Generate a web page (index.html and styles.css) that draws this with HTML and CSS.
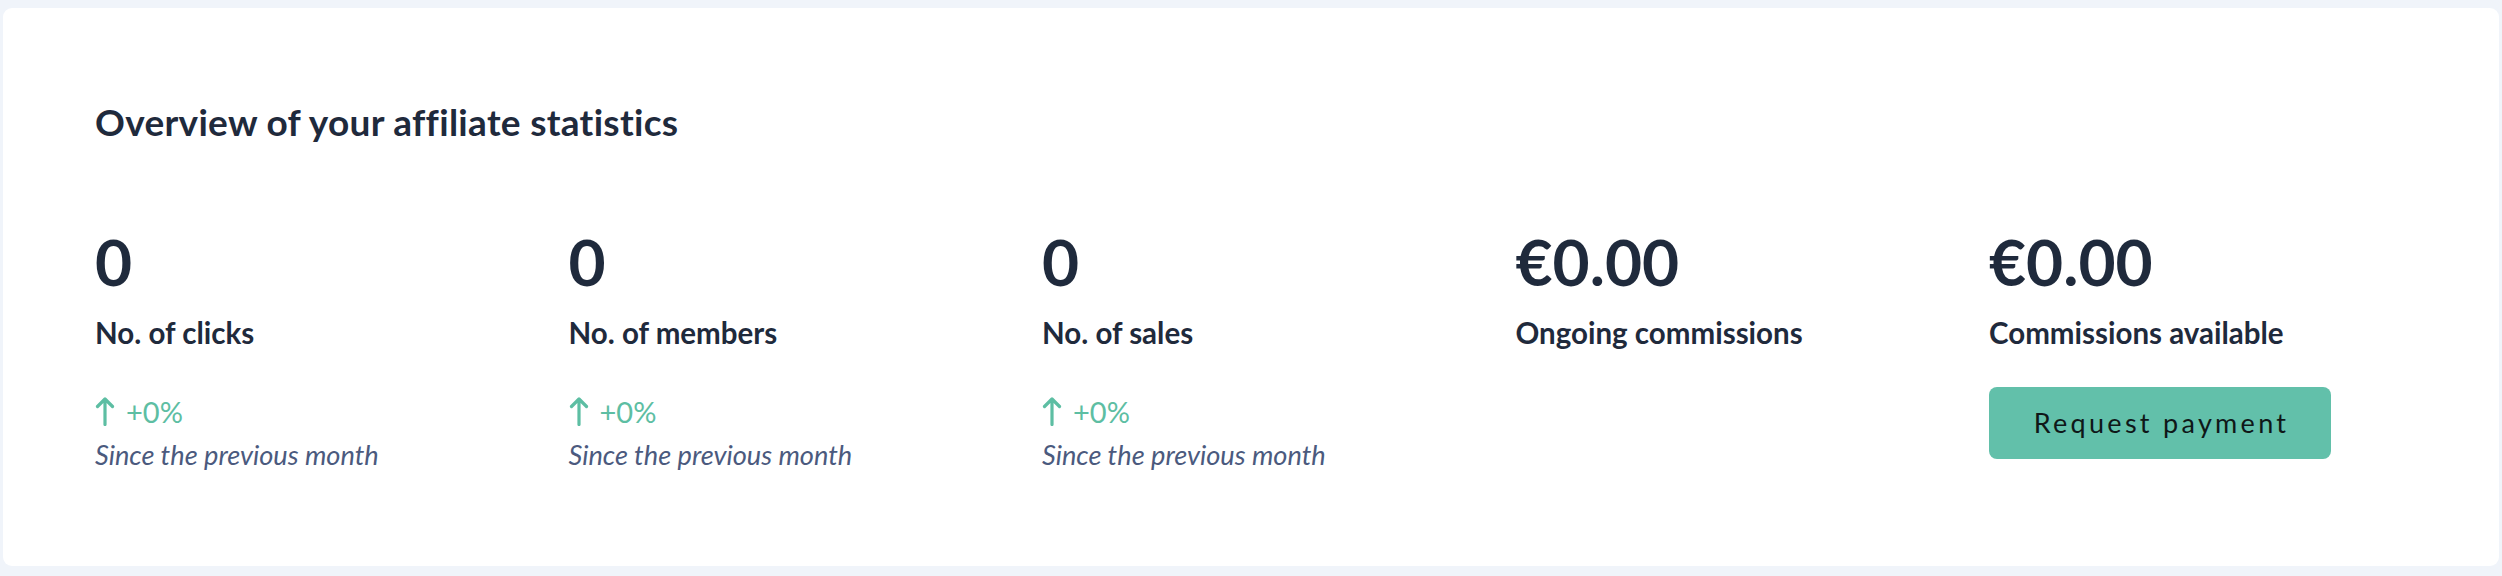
FILE: index.html
```html
<!DOCTYPE html>
<html lang="en">
<head>
<meta charset="utf-8">
<title>Affiliate statistics</title>
<link rel="stylesheet" href="styles.css">
</head>
<body>
<section class="card">
  <h2 class="title">Overview of your affiliate statistics</h2>
  <div class="stats">
    <div class="stat">
      <div class="value">0</div>
      <div class="label">No. of clicks</div>
      <div class="change"><svg class="arrow" viewBox="0 0 20 29" width="20" height="29"><path d="M10 27.5V2M2.5 9.5L10 2L17.5 9.5"/></svg><span>+0%</span></div>
      <div class="since">Since the previous month</div>
    </div>
    <div class="stat">
      <div class="value">0</div>
      <div class="label">No. of members</div>
      <div class="change"><svg class="arrow" viewBox="0 0 20 29" width="20" height="29"><path d="M10 27.5V2M2.5 9.5L10 2L17.5 9.5"/></svg><span>+0%</span></div>
      <div class="since">Since the previous month</div>
    </div>
    <div class="stat">
      <div class="value">0</div>
      <div class="label">No. of sales</div>
      <div class="change"><svg class="arrow" viewBox="0 0 20 29" width="20" height="29"><path d="M10 27.5V2M2.5 9.5L10 2L17.5 9.5"/></svg><span>+0%</span></div>
      <div class="since">Since the previous month</div>
    </div>
    <div class="stat">
      <div class="value">€0.00</div>
      <div class="label">Ongoing commissions</div>
    </div>
    <div class="stat">
      <div class="value">€0.00</div>
      <div class="label">Commissions available</div>
      <button class="btn" type="button">Request payment</button>
    </div>
  </div>
</section>
</body>
</html>
```

FILE: styles.css
```css
html, body {
  height: 100%;
}
body {
  margin: 0;
  padding: 8px 3px 10px 3px;
  box-sizing: border-box;
  background: #f0f4fa;
  font-family: Lato, "Noto Sans", sans-serif;
  color: #1f2a3c;
}
.card {
  background: #ffffff;
  border-radius: 9px;
  height: 558px;
  box-sizing: border-box;
  padding: 92px 36px 0 92px;
}
.title {
  margin: 0;
  font-size: 37px;
  letter-spacing: 0.3px;
  line-height: 1.2;
  font-weight: 700;
}
.stats {
  display: grid;
  grid-template-columns: repeat(5, 473.5px);
  margin-top: 80px;
}
.stat {
  display: flex;
  flex-direction: column;
  align-items: flex-start;
}
.value {
  font-size: 64px;
  line-height: 1.2;
  font-weight: 700;
}
.label {
  margin-top: 14px;
  font-size: 29.5px;
  line-height: 1.2;
  font-weight: 700;
}
.change {
  margin-top: 44px;
  display: flex;
  align-items: center;
  gap: 11px;
  font-size: 29px;
  line-height: 1.2;
  color: #5dbea3;
}
.arrow {
  fill: none;
  stroke: #5dbea3;
  stroke-width: 3.2;
  stroke-linecap: round;
  stroke-linejoin: round;
}
.since {
  margin-top: 10px;
  font-size: 27.2px;
  line-height: 1.2;
  font-style: italic;
  color: #4b5a7e;
}
.btn {
  margin-top: 36px;
  width: 342px;
  height: 72px;
  border: none;
  border-radius: 8px;
  background: #62c0aa;
  color: #0f1718;
  font-family: inherit;
  font-size: 27px;
  letter-spacing: 3.3px;
  padding: 0 0 0 3px;
}
```
